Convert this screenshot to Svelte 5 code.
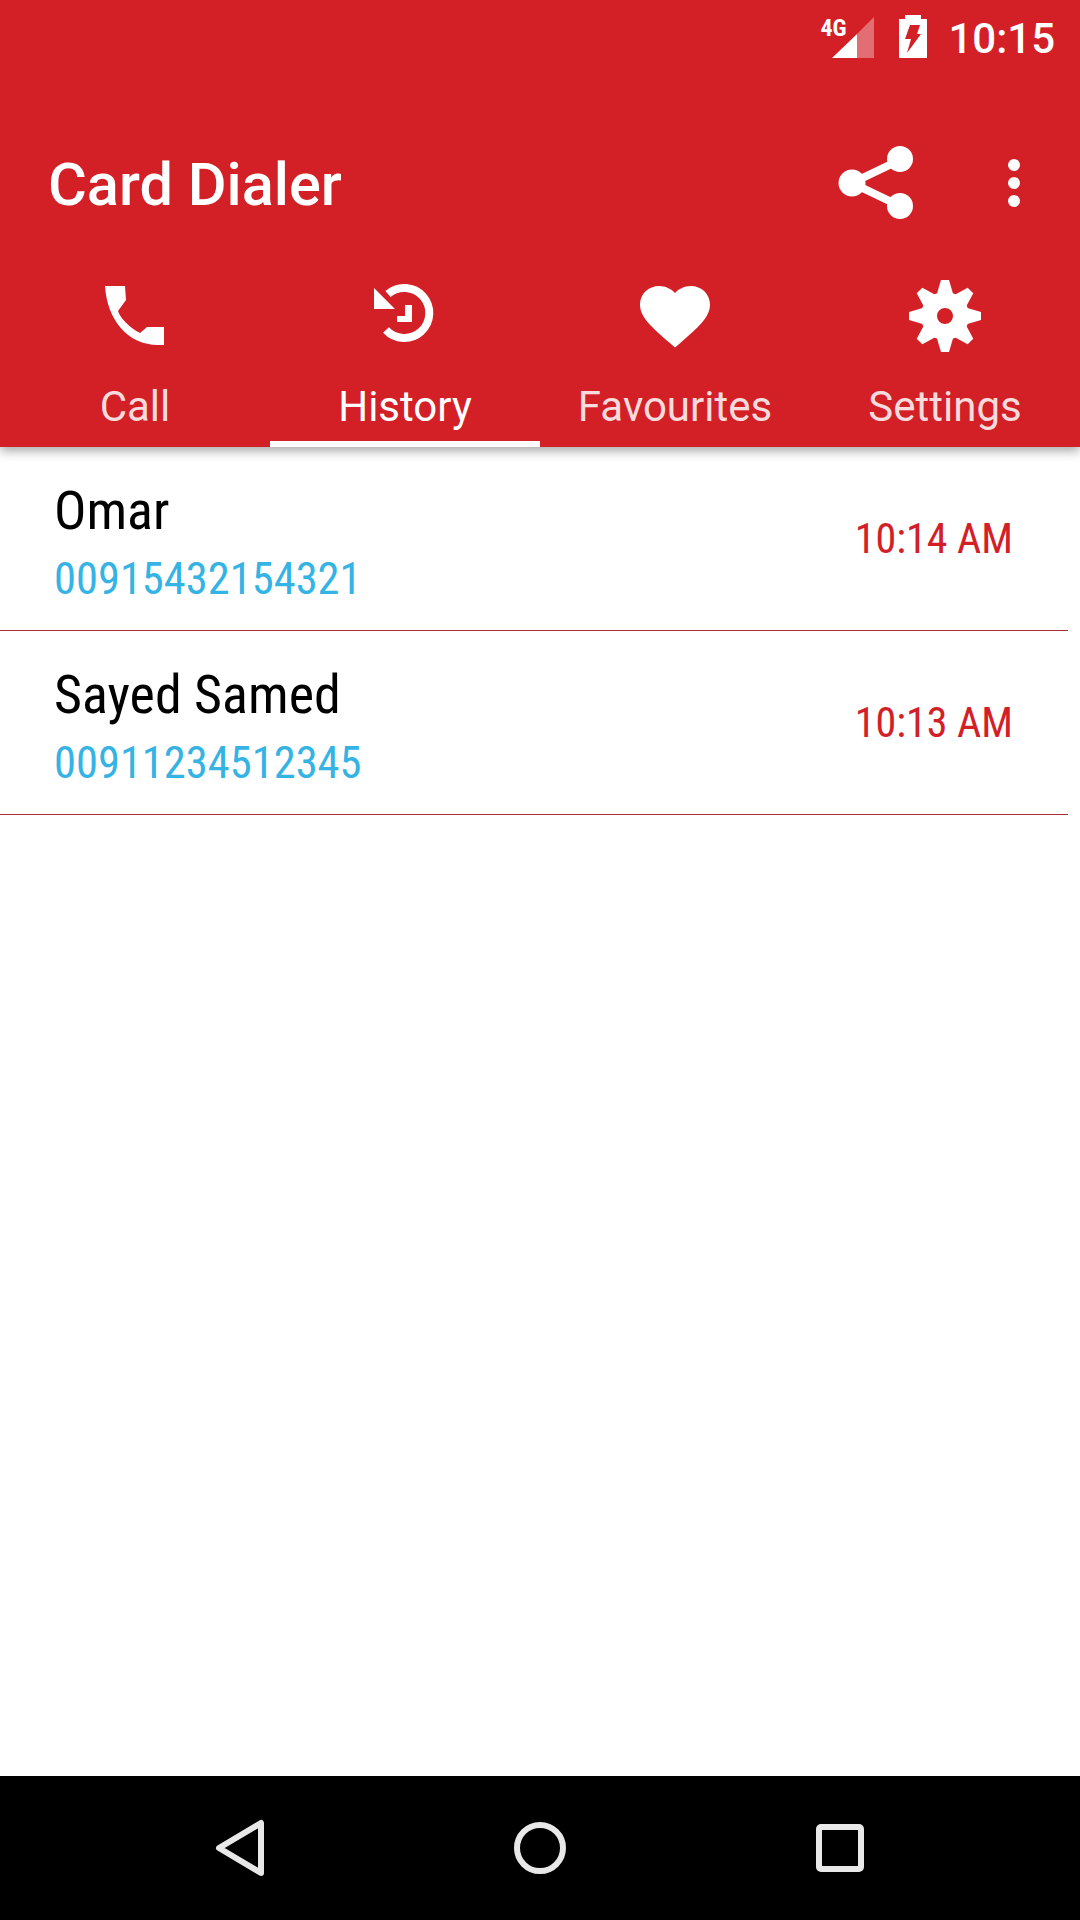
<script lang="ts">
  type Call = { name: string; number: string; time: string };

  const tabs = ['Call', 'History', 'Favourites', 'Settings'];
  const activeTab = 'History';
  const gearTeeth = [0, 45, 90, 135, 180, 225, 270, 315];

  const calls: Call[] = [
    { name: 'Omar', number: '00915432154321', time: '10:14 AM' },
    { name: 'Sayed Samed', number: '00911234512345', time: '10:13 AM' },
  ];
</script>

<div class="page">
  <header class="header">
    <div class="status-bar">
      <div class="signal">
        <span class="network">4G</span>
        <svg width="42" height="41" viewBox="0 0 42 41">
          <path d="M42 0V41H25V17Z" fill="#fff" fill-opacity="0.35" />
          <path d="M25 17V41H0Z" fill="#fff" />
        </svg>
      </div>
      <svg class="battery" width="28" height="43" viewBox="0 0 28 43">
        <path d="M6 0H22V4H28V43H0V4H6Z" fill="#fff" />
        <path d="M11 10H21L18 19H22L8 38L12 24H6Z" fill="#d32027" />
      </svg>
      <span class="clock">10:15</span>
    </div>

    <div class="toolbar">
      <h1 class="title">Card Dialer</h1>
      <svg class="share" width="76" height="74" viewBox="0 0 76 74">
        <path d="M62 14L14 37L62 60" fill="none" stroke="#fff" stroke-width="8" />
        <circle cx="62" cy="13" r="13" fill="#fff" />
        <circle cx="14" cy="37" r="13.5" fill="#fff" />
        <circle cx="62" cy="60" r="13" fill="#fff" />
      </svg>
      <svg class="more" width="12" height="48" viewBox="0 0 12 48">
        <circle cx="6" cy="6" r="6" fill="#fff" />
        <circle cx="6" cy="24" r="6" fill="#fff" />
        <circle cx="6" cy="42" r="6" fill="#fff" />
      </svg>
    </div>

    <nav class="tabs">
      {#each tabs as tab}
        <div class="tab" class:active={tab === activeTab}>
          <svg class="tab-icon" width="90" height="90" viewBox="0 0 90 90" fill="#fff">
            {#if tab === 'Call'}
              <path d="M15 16H35L36 30L28 41C30 48 40 58 50 63L57 57H74V75H68C38 75 17 50 15 16Z" />
            {:else if tab === 'History'}
              <path d="M28 24A25 25 0 1 1 26 60" fill="none" stroke="#fff" stroke-width="8" />
              <path d="M14 18V39H35Z" />
              <path d="M45 35H52V52H37V46H45Z" />
            {:else if tab === 'Favourites'}
              <path transform="translate(3 6) scale(3.5 3.35)" d="M12 21.35l-1.45-1.32C5.4 15.36 2 12.28 2 8.5 2 5.42 4.42 3 7.5 3c1.74 0 3.41.81 4.5 2.09C13.09 3.81 14.76 3 16.5 3 19.58 3 22 5.42 22 8.5c0 3.78-3.4 6.86-8.55 11.54L12 21.35z" />
            {:else}
              <circle cx="45" cy="46" r="16" fill="none" stroke="#fff" stroke-width="16" />
              {#each gearTeeth as angle}
                <path transform="rotate({angle} 45 46)" d="M41 10H49L54 27H36Z" />
              {/each}
            {/if}
          </svg>
          <span class="tab-label">{tab}</span>
        </div>
      {/each}
    </nav>
  </header>

  <main class="list">
    {#each calls as call}
      <div class="row">
        <div class="contact">
          <span class="name">{call.name}</span>
          <span class="number">{call.number}</span>
        </div>
        <span class="time">{call.time}</span>
      </div>
    {/each}
  </main>

  <footer class="nav-bar">
    <div class="nav-button">
      <svg width="54" height="62" viewBox="0 0 54 62">
        <path d="M48 6V56L6 31Z" fill="none" stroke="#e8e8e8" stroke-width="6" stroke-linejoin="round" />
      </svg>
    </div>
    <div class="nav-button">
      <svg width="52" height="52" viewBox="0 0 52 52">
        <circle cx="26" cy="26" r="23" fill="none" stroke="#e8e8e8" stroke-width="6" />
      </svg>
    </div>
    <div class="nav-button">
      <svg width="48" height="48" viewBox="0 0 48 48">
        <rect x="3" y="3" width="42" height="42" rx="2" fill="none" stroke="#e8e8e8" stroke-width="6" />
      </svg>
    </div>
  </footer>
</div>

<style>
  :global(body) {
    margin: 0;
    background: #fff;
  }

  .page {
    width: 1080px;
    height: 1920px;
    display: flex;
    flex-direction: column;
    overflow: hidden;
    font-family: Roboto, "Liberation Sans", sans-serif;
  }

  .header {
    background: #d32027;
    color: #fff;
    box-shadow: 0 4px 10px rgba(0, 0, 0, 0.35);
    position: relative;
    z-index: 1;
  }

  .status-bar {
    height: 72px;
    display: flex;
    justify-content: flex-end;
    align-items: flex-start;
    padding: 15px 25px 0 0;
    box-sizing: border-box;
  }

  .signal {
    display: flex;
    align-items: flex-start;
    position: relative;
    margin: 2px 25px 0 0;
  }

  .network {
    position: absolute;
    left: -12px;
    top: -2px;
    font-size: 24px;
    line-height: 26px;
    font-weight: 700;
    font-stretch: 80%;
  }

  .battery {
    margin-right: 21px;
  }

  .clock {
    font-size: 42px;
    line-height: 48px;
    font-weight: 500;
  }

  .toolbar {
    height: 150px;
    margin-top: 38px;
    display: flex;
    align-items: center;
    padding: 0 60px 0 48px;
  }

  .title {
    margin: 0 auto 0 0;
    font-size: 59.5px;
    font-weight: 500;
  }

  .share {
    margin-bottom: 4px;
    margin-right: -2px;
  }

  .more {
    margin-left: 96px;
    margin-bottom: 4px;
  }

  .tabs {
    height: 187px;
    display: flex;
  }

  .tab {
    flex: 1;
    display: flex;
    flex-direction: column;
    align-items: center;
    padding-top: 10px;
    box-sizing: border-box;
    border-bottom: 6px solid transparent;
  }

  .tab.active {
    border-bottom-color: #fff;
  }

  .tab-icon {
    filter: blur(0.7px);
  }

  .tab-label {
    font-size: 42px;
    line-height: 50px;
    margin-top: 22px;
    color: rgba(255, 255, 255, 0.85);
  }

  .tab.active .tab-label {
    color: #fff;
  }

  .list {
    flex: 1;
  }

  .row {
    width: 1068px;
    height: 184px;
    box-sizing: border-box;
    padding: 0 55px 0 54px;
    display: flex;
    align-items: center;
    justify-content: space-between;
    border-bottom: 1px solid #ab2b36;
  }

  .contact {
    display: flex;
    flex-direction: column;
  }

  .name {
    font-family: "Roboto Condensed", Roboto, sans-serif;
    font-stretch: 75%;
    font-size: 54px;
    line-height: 66px;
    color: #000;
  }

  .number {
    font-family: "Roboto Condensed", Roboto, sans-serif;
    font-stretch: 75%;
    font-size: 44.5px;
    line-height: 56px;
    margin-top: 7px;
    margin-bottom: -7px;
    color: #35b3e4;
  }

  .time {
    font-size: 42px;
    font-stretch: 87%;
    color: #d32027;
  }

  .nav-bar {
    height: 144px;
    background: #000;
    display: flex;
    align-items: center;
    padding: 0 90px;
  }

  .nav-button {
    flex: 1;
    display: flex;
    justify-content: center;
  }
</style>
